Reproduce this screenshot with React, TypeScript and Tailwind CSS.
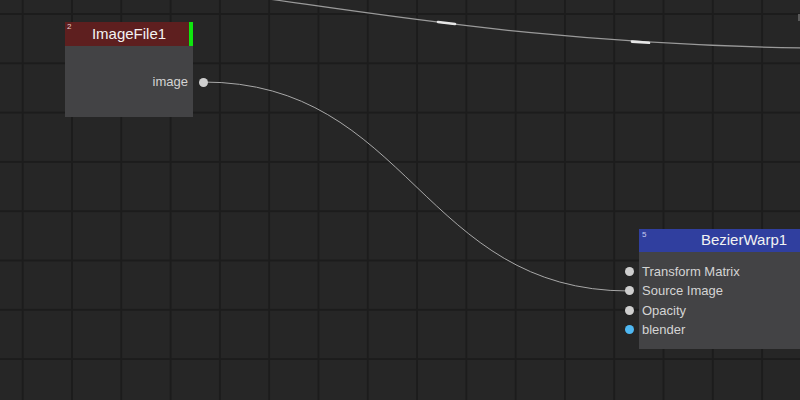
import React from 'react';

type Port = { label: string; color?: string };

const inputs: Port[] = [
  { label: 'Transform Matrix' },
  { label: 'Source Image' },
  { label: 'Opacity' },
  { label: 'blender', color: 'bg-[#4fb8f2]' },
];

const Wires: React.FC = () => (
  <svg className="absolute inset-0" width={800} height={400} viewBox="0 0 800 400">
    {/* top wire, both ends off screen */}
    <path d="M 240 -5 C 380 14, 560 46, 820 48" fill="none" stroke="#9a9a9a" strokeWidth={1.2} />
    <line x1={438} y1={22} x2={455} y2={24} stroke="#e6e6e6" strokeWidth={2.6} strokeLinecap="round" />
    <line x1={632} y1={41.6} x2={649} y2={42.8} stroke="#e6e6e6" strokeWidth={2.6} strokeLinecap="round" />
    {/* image -> Source Image */}
    <path d="M 203 82 C 410 82, 422 291, 629 291" fill="none" stroke="#a8a8a8" strokeWidth={1} />
  </svg>
);

const ImageFileNode: React.FC = () => (
  <div className="absolute left-[65px] top-[22px] w-[128px] h-[95px] flex flex-col bg-[#434345]">
    <div className="relative h-[24px] bg-[#5e1f1f] flex items-center justify-center">
      <span className="absolute left-[2px] top-[1px] text-[8px] leading-none text-[#e8d0d0]">2</span>
      <span className="text-[15px] text-[#f2f2f2]">ImageFile1</span>
      <div className="absolute right-0 top-0 h-full w-[4px] bg-[#0ee60e]" />
    </div>
    <div className="relative mt-[26px] h-[20px] flex items-center justify-end pr-[5px]">
      <span className="text-[13px] text-[#d4d4d4]">image</span>
      <div className="absolute right-[-15px] top-[5.5px] w-[9px] h-[9px] rounded-full bg-[#cfcfcf]" />
    </div>
  </div>
);

const BezierWarpNode: React.FC = () => (
  <div className="absolute left-[639px] top-[229px] w-[210px] h-[120px] flex flex-col bg-[#434345]">
    <div className="relative h-[23px] bg-[#303f9f] flex items-center justify-center">
      <span className="absolute left-[3px] top-[2px] text-[8px] leading-none text-[#c8ccf0]">5</span>
      <span className="text-[15px] text-[#f2f2f2]">BezierWarp1</span>
    </div>
    <div className="flex flex-col pt-[10px]">
      {inputs.map((p) => (
        <div key={p.label} className="relative h-[19.3px] flex items-center pl-[3px]">
          <div
            className={`absolute left-[-14.5px] top-[5.15px] w-[9px] h-[9px] rounded-full ${p.color ?? 'bg-[#cfcfcf]'}`}
          />
          <span className="text-[13px] text-[#d4d4d4]">{p.label}</span>
        </div>
      ))}
    </div>
  </div>
);

export default function App() {
  return (
    <div
      className="relative w-[800px] h-[400px] overflow-hidden bg-[#262626] bg-[image:linear-gradient(to_right,#1c1c1c_2px,transparent_2px),linear-gradient(to_bottom,#1c1c1c_2px,transparent_2px)] bg-[length:49.3px_49.3px] bg-[position:21.7px_13px]"
      style={{ fontFamily: '"Liberation Sans", Arial, sans-serif' }}
    >
      <Wires />
      <div className="absolute left-[798px] top-[14px] w-[2px] h-[7px] bg-[#5a5a5a]" />
      <ImageFileNode />
      <BezierWarpNode />
    </div>
  );
}
